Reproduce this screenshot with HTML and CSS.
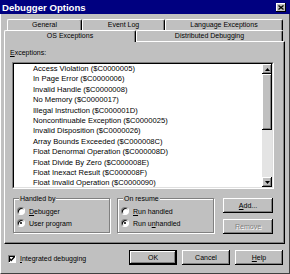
FILE: index.html
```html
<!DOCTYPE html>
<html lang="en">
<head>
  <meta charset="UTF-8">
  <title>Debugger Options</title>
  <link rel="stylesheet" href="styles.css">
</head>
<body>
<div class="window">
  <div class="titlebar">
    <span class="title">Debugger Options</span>
    <span class="close-btn">
      <svg width="6" height="5" viewBox="0 0 6 5"><path d="M0.5 0.5L5.5 4.5M5.5 0.5L0.5 4.5" stroke="#000" stroke-width="1.3"/></svg>
    </span>
  </div>
  <div class="dialog">
    <div class="tab-row back">
      <div class="tab tab-general">General</div>
      <div class="tab tab-events">Event Log</div>
      <div class="tab tab-lang">Language Exceptions</div>
    </div>
    <div class="tab-row front">
      <div class="tab tab-os active">OS Exceptions</div>
      <div class="tab tab-dist">Distributed Debugging</div>
    </div>
    <div class="panel">
      <div class="field-label"><u>E</u>xceptions:</div>
      <div class="listbox">
        <div class="listbox-inner">
          <ul class="items">
            <li>Access Violation ($C0000005)</li>
            <li>In Page Error ($C0000006)</li>
            <li>Invalid Handle ($C0000008)</li>
            <li>No Memory ($C0000017)</li>
            <li>Illegal Instruction ($C000001D)</li>
            <li>Noncontinuable Exception ($C0000025)</li>
            <li>Invalid Disposition ($C0000026)</li>
            <li>Array Bounds Exceeded ($C000008C)</li>
            <li>Float Denormal Operation ($C000008D)</li>
            <li>Float Divide By Zero ($C000008E)</li>
            <li>Float Inexact Result ($C000008F)</li>
            <li>Float Invalid Operation ($C0000090)</li>
          </ul>
          <div class="scrollbar">
            <div class="sb-btn">
              <svg width="5" height="3" viewBox="0 0 5 3"><path d="M2.5 0L5 3H0Z" fill="#000"/></svg>
            </div>
            <div class="sb-thumb"></div>
            <div class="sb-track"></div>
            <div class="sb-btn">
              <svg width="5" height="3" viewBox="0 0 5 3"><path d="M0 0H5L2.5 3Z" fill="#000"/></svg>
            </div>
          </div>
        </div>
      </div>
      <div class="options">
        <div class="group">
          <span class="group-label">Handled by</span>
          <label class="radio"><span class="radio-dot"></span><span><u>D</u>ebugger</span></label>
          <label class="radio"><span class="radio-dot checked"></span><span>User program</span></label>
        </div>
        <div class="group">
          <span class="group-label">On resume</span>
          <label class="radio"><span class="radio-dot"></span><span><u>R</u>un handled</span></label>
          <label class="radio"><span class="radio-dot checked"></span><span>Run u<u>n</u>handled</span></label>
        </div>
        <div class="side-buttons">
          <button class="btn"><u>A</u>dd...</button>
          <button class="btn" disabled>Remove</button>
        </div>
      </div>
    </div>
    <div class="footer">
      <label class="check">
        <span class="check-box">
          <svg width="6" height="6" viewBox="0 0 6 6"><path d="M0.5 2.5L2.2 4.5L5.5 0.8" stroke="#000" stroke-width="1.4" fill="none"/></svg>
        </span>
        <span><u>I</u>ntegrated debugging</span>
      </label>
      <div class="footer-buttons">
        <button class="btn btn-default">OK</button>
        <button class="btn">Cancel</button>
        <button class="btn"><u>H</u>elp</button>
      </div>
    </div>
  </div>
</div>
</body>
</html>
```

FILE: styles.css
```css
* { box-sizing: border-box; }
body {
  margin: 0;
  background: #c0c0c0;
  color: #000;
  font-family: 'Liberation Sans', Arial, sans-serif;
  font-size: 7px;
}
.window {
  width: 290px;
  height: 274px;
  display: flex;
  flex-direction: column;
  background: #c0c0c0;
}
.titlebar {
  height: 14px;
  background: #000080;
  color: #fff;
  display: flex;
  align-items: center;
  justify-content: space-between;
  padding: 0 4px 0 2px;
}
.title {
  font-weight: bold;
  font-size: 9.6px;
}
.close-btn {
  width: 10px;
  height: 9px;
  background: #c0c0c0;
  box-shadow: inset -1px -1px #000, inset 1px 1px #fff;
  display: flex;
  align-items: center;
  justify-content: center;
}
.dialog {
  flex: 1;
  display: flex;
  flex-direction: column;
  border-left: 1px solid #fff;
  border-right: 1px solid #404040;
  border-bottom: 1px solid #404040;
  padding: 5px 4px 0 3px;
}
.tab-row {
  display: flex;
  height: 11px;
}
.tab-row.back {
  margin-left: 3px;
}
.tab {
  height: 11px;
  line-height: 10px;
  text-align: center;
  border-top: 1px solid #fff;
  border-left: 1px solid #fff;
  border-right: 1px solid #000;
  box-shadow: inset -1px 0 #808080;
  border-radius: 2px 2px 0 0;
  background: #c0c0c0;
}
.tab-general { width: 75px; }
.tab-events { width: 83px; }
.tab-lang { width: 118px; }
.tab-os { width: 132px; }
.tab-dist { width: 147px; }
.tab.active {
  height: 12px;
  position: relative;
  z-index: 1;
}
.panel {
  height: 203px;
  border: 1px solid;
  border-color: #fff #000 #000 #fff;
  box-shadow: inset -1px -1px #808080;
  padding: 6px 0 0 7px;
}
.field-label {
  line-height: 9px;
  margin-left: -2px;
}
.listbox {
  width: 262px;
  height: 127px;
  margin-top: 5px;
  border: 1px solid;
  border-color: #808080 #fff #fff #808080;
  display: flex;
}
.listbox-inner {
  flex: 1;
  display: flex;
  background: #fff;
  border: 1px solid;
  border-color: #000 #dfdfdf #dfdfdf #000;
}
.items {
  flex: 1;
  list-style: none;
  margin: 0;
  padding: 0 0 0 19px;
  overflow: hidden;
  font-size: 7.6px;
}
.items li {
  line-height: 10.4px;
  white-space: nowrap;
}
.scrollbar {
  width: 10px;
  display: flex;
  flex-direction: column;
}
.sb-btn, .sb-thumb {
  background: #c0c0c0;
  box-shadow: inset -1px -1px #000, inset 1px 1px #fff, inset -2px -2px #808080;
}
.sb-btn {
  height: 10px;
  display: flex;
  align-items: center;
  justify-content: center;
}
.sb-thumb {
  height: 56px;
}
.sb-track {
  flex: 1;
  background: #e4e4e4;
}
.options {
  display: flex;
  margin-top: 9px;
  margin-left: 1px;
}
.group {
  width: 97px;
  height: 35px;
  margin-right: 7px;
  border: 1px solid #808080;
  box-shadow: inset 1px 1px #fff, 1px 1px #fff;
  display: flex;
  flex-direction: column;
  align-items: flex-start;
  padding-left: 3px;
}
.group-label {
  line-height: 9px;
  margin-top: -5px;
  margin-left: 2px;
  margin-bottom: 2px;
  padding: 0 1px;
  background: #c0c0c0;
}
.radio {
  display: flex;
  align-items: center;
  gap: 4px;
  height: 12px;
}
.radio-dot {
  width: 8px;
  height: 8px;
  border-radius: 50%;
  background: #fff;
  border: 1px solid;
  border-color: #808080 #fff #fff #808080;
  box-shadow: inset 1px 1px #000;
  display: flex;
  align-items: center;
  justify-content: center;
}
.radio-dot.checked::after {
  content: "";
  width: 2px;
  height: 2px;
  border-radius: 50%;
  background: #000;
}
.side-buttons {
  display: flex;
  flex-direction: column;
  gap: 6px;
  margin-left: 2px;
}
.btn {
  width: 50px;
  height: 15px;
  padding: 0;
  border: none;
  background: #c0c0c0;
  font: inherit;
  color: #000;
  box-shadow: inset -1px -1px #000, inset 1px 1px #fff, inset -2px -2px #808080;
}
.btn:disabled {
  color: #808080;
  text-shadow: 1px 1px #fff;
}
.footer {
  display: flex;
  align-items: center;
  justify-content: space-between;
  margin-top: 6px;
  height: 15px;
}
.check {
  display: flex;
  align-items: center;
  gap: 4px;
  margin-left: 4px;
  margin-top: 2px;
}
.check-box {
  width: 8px;
  height: 8px;
  background: #fff;
  border: 1px solid;
  border-color: #808080 #fff #fff #808080;
  box-shadow: inset 1px 1px #000;
  display: flex;
  align-items: center;
  justify-content: center;
}
.footer-buttons {
  display: flex;
  gap: 5px;
  margin-right: 2px;
}
.footer-buttons .btn {
  width: 48px;
}
.btn-default {
  border: 1px solid #000;
}
```
